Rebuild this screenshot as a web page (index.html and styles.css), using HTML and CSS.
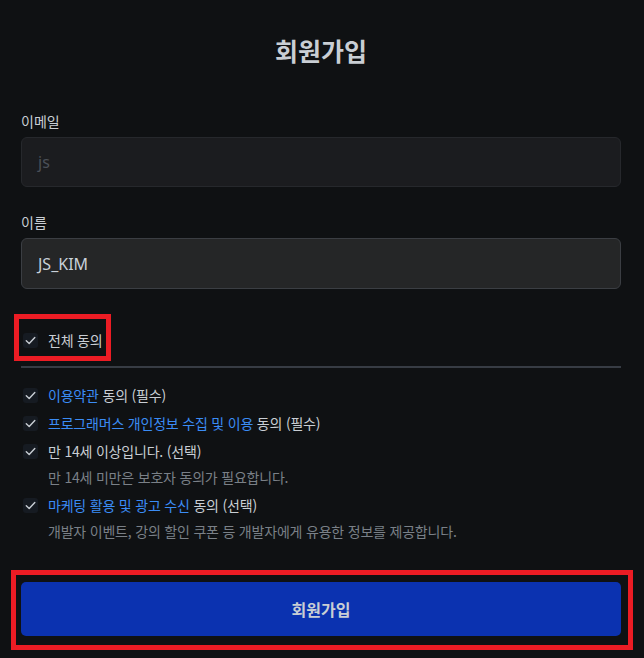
FILE: index.html
```html
<!DOCTYPE html>
<html lang="ko">
<head>
<meta charset="utf-8">
<title>회원가입</title>
<link rel="stylesheet" href="styles.css">
</head>
<body>
<main class="page">
  <h1 class="title">회원가입</h1>

  <div class="field">
    <label class="label">이메일</label>
    <div class="input input-disabled">js</div>
  </div>

  <div class="field field-name">
    <label class="label">이름</label>
    <div class="input input-filled">JS_KIM</div>
  </div>

  <div class="all-wrap">
    <div class="check-row">
      <span class="box"><svg viewBox="0 0 16 16" width="15" height="15"><path d="M3.5 8.3 L6.6 11.2 L12.6 4.9" fill="none" stroke="#c9ced4" stroke-width="1.5" stroke-linecap="round" stroke-linejoin="round"/></svg></span>
      <span class="text-main">전체 동의</span>
    </div>
  </div>

  <hr class="divider">

  <ul class="terms">
    <li class="term">
      <div class="check-row">
        <span class="box"><svg viewBox="0 0 16 16" width="15" height="15"><path d="M3.5 8.3 L6.6 11.2 L12.6 4.9" fill="none" stroke="#c9ced4" stroke-width="1.5" stroke-linecap="round" stroke-linejoin="round"/></svg></span>
        <span class="text-main"><span class="link">이용약관</span> 동의 (필수)</span>
      </div>
    </li>
    <li class="term">
      <div class="check-row">
        <span class="box"><svg viewBox="0 0 16 16" width="15" height="15"><path d="M3.5 8.3 L6.6 11.2 L12.6 4.9" fill="none" stroke="#c9ced4" stroke-width="1.5" stroke-linecap="round" stroke-linejoin="round"/></svg></span>
        <span class="text-main"><span class="link">프로그래머스 개인정보 수집 및 이용</span> 동의 (필수)</span>
      </div>
    </li>
    <li class="term">
      <div class="check-row">
        <span class="box"><svg viewBox="0 0 16 16" width="15" height="15"><path d="M3.5 8.3 L6.6 11.2 L12.6 4.9" fill="none" stroke="#c9ced4" stroke-width="1.5" stroke-linecap="round" stroke-linejoin="round"/></svg></span>
        <span class="text-main">만 14세 이상입니다. (선택)</span>
      </div>
      <p class="sub">만 14세 미만은 보호자 동의가 필요합니다.</p>
    </li>
    <li class="term">
      <div class="check-row">
        <span class="box"><svg viewBox="0 0 16 16" width="15" height="15"><path d="M3.5 8.3 L6.6 11.2 L12.6 4.9" fill="none" stroke="#c9ced4" stroke-width="1.5" stroke-linecap="round" stroke-linejoin="round"/></svg></span>
        <span class="text-main"><span class="link">마케팅 활용 및 광고 수신</span> 동의 (선택)</span>
      </div>
      <p class="sub">개발자 이벤트, 강의 할인 쿠폰 등 개발자에게 유용한 정보를 제공합니다.</p>
    </li>
  </ul>

  <div class="btn-wrap">
    <button class="submit">회원가입</button>
  </div>
</main>
</body>
</html>
```

FILE: styles.css
```css
* { box-sizing: border-box; }

html, body {
  margin: 0;
  padding: 0;
  background: #0f1113;
}

body {
  font-family: "Noto Sans CJK KR", "Noto Sans", "Liberation Sans", sans-serif;
  color: #c9d1d9;
}

.page {
  width: 600px;
  margin-left: 21px;
  display: flex;
  flex-direction: column;
}

.title {
  margin: 34px 0 0;
  height: 32px;
  line-height: 32px;
  font-size: 25px;
  font-weight: 700;
  text-align: center;
  color: #c9ced4;
}

.field {
  display: flex;
  flex-direction: column;
  gap: 6px;
  margin-top: 45px;
}

.field-name {
  margin-top: 25px;
}

.label {
  font-size: 14px;
  line-height: 20px;
  height: 20px;
  color: #c9ced4;
}

.input {
  height: 50px;
  border-radius: 6px;
  padding: 0 16px;
  display: flex;
  align-items: center;
  font-size: 16px;
  font-family: "Noto Sans", "Noto Sans CJK KR", sans-serif;
}

.input-disabled {
  background: #1b1c1f;
  border: 1px solid #26282c;
  color: #4b5058;
}

.input-filled {
  background: #252627;
  border: 1px solid #3b3e43;
  color: #c9d1d9;
  height: 51px;
}

.all-wrap {
  align-self: flex-start;
  margin-top: 25px;
  margin-left: -7px;
  border: 5px solid #ec1c24;
  padding: 11px 4px 6px 4px;
}

.check-row {
  display: flex;
  align-items: center;
  gap: 10px;
  height: 20px;
}

.box {
  width: 15px;
  height: 15px;
  border-radius: 3px;
  background: #161b22;
  display: flex;
  align-items: center;
  justify-content: center;
  flex-shrink: 0;
}

.box svg { display: block; }

.text-main {
  font-size: 14px;
  line-height: 20px;
  color: #c9ced4;
  white-space: nowrap;
  letter-spacing: -0.2px;
}

.link {
  color: #3b8cf5;
}

.divider {
  margin: 5px 0 0;
  border: 0;
  height: 2px;
  background: #373c44;
}

.terms {
  list-style: none;
  margin: 17px 0 0;
  padding: 0 0 0 2px;
  display: flex;
  flex-direction: column;
  gap: 8px;
}

.term {
  display: flex;
  flex-direction: column;
  gap: 6px;
}

.sub {
  margin: 0;
  padding-left: 25px;
  font-size: 14px;
  line-height: 20px;
  color: #7a8087;
  letter-spacing: -0.2px;
}

.btn-wrap {
  margin-top: 29px;
  margin-left: -10px;
  width: 622px;
  border: 5px solid #ec1c24;
  padding: 7px 7px 9px 5px;
}

.submit {
  display: block;
  width: 600px;
  height: 54px;
  border: 0;
  border-radius: 5px;
  background: #0b32b0;
  color: #c9ced4;
  font-family: "Noto Sans CJK KR", "Noto Sans", sans-serif;
  font-size: 16px;
  font-weight: 700;
}
```
